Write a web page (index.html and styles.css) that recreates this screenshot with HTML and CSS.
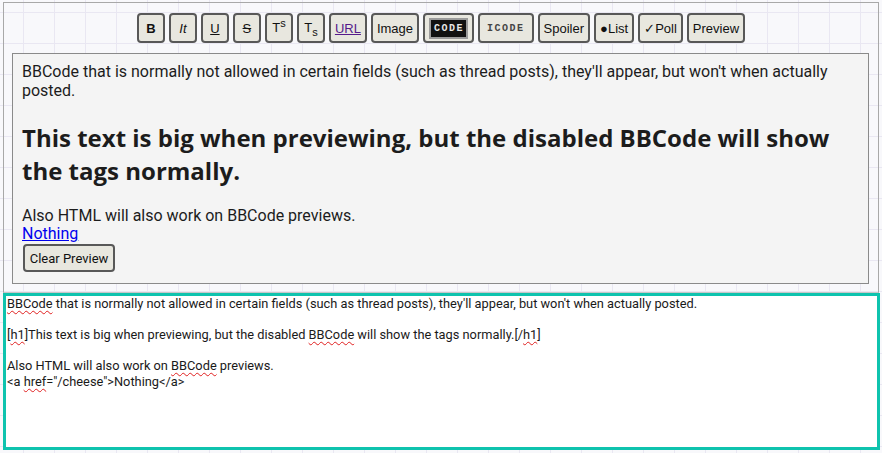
FILE: index.html
```html
<!DOCTYPE html>
<html>
<head>
<meta charset="utf-8">
<link rel="stylesheet" href="styles.css">
</head>
<body>
<div class="editor">
  <div class="frame">
    <div class="toolbar">
      <button class="tb"><b>B</b></button>
      <button class="tb"><i>It</i></button>
      <button class="tb"><u>U</u></button>
      <button class="tb"><s>S</s></button>
      <button class="tb"><span class="tt">T<span class="sup">s</span></span></button>
      <button class="tb"><span class="tt">T<span class="sub">s</span></span></button>
      <button class="tb"><span class="url">URL</span></button>
      <button class="tb">Image</button>
      <button class="tb"><span class="code">CODE</span></button>
      <button class="tb"><span class="icode">ICODE</span></button>
      <button class="tb">Spoiler</button>
      <button class="tb">●List</button>
      <button class="tb">✓Poll</button>
      <button class="tb">Preview</button>
    </div>
    <div class="preview">
      <div class="ptext">BBCode that is normally not allowed in certain fields (such as thread posts), they'll appear, but won't when actually posted.</div>
      <h1 class="big">This text is big when previewing, but the disabled BBCode will show the tags normally.</h1>
      <div class="ptext">Also HTML will also work on BBCode previews.<br><a href="#" class="plink">Nothing</a></div>
      <button class="clear">Clear Preview</button>
    </div>
  </div>
  <div class="input" role="textbox"><span class="sp">BBCode</span> that is normally not allowed in certain fields (such as thread posts), they'll appear, but won't when actually posted.

[<span class="sp">h1</span>]This text is big when previewing, but the disabled <span class="sp">BBCode</span> will show the tags normally.[/<span class="sp">h1</span>]

Also HTML will also work on <span class="sp">BBCode</span> previews.
&lt;a <span class="sp">href</span>="/cheese"&gt;Nothing&lt;/a&gt;</div>
</div>
</body>
</html>
```
FILE: styles.css
```css
html, body {
  margin: 0;
  padding: 0;
}
body {
  width: 882px;
  height: 453px;
  overflow: hidden;
  background-color: #f8f8fb;
  background-image:
    linear-gradient(#e9e7f2 1px, transparent 1px),
    linear-gradient(90deg, #e9e7f2 1px, transparent 1px);
  background-size: 31px 31px;
  background-position: 23px 12px;
  font-family: Roboto, "Liberation Sans", sans-serif;
  color: #1c1c1c;
}
.editor {
  margin: 2px 0 0 3px;
  width: 877px;
}
.frame {
  width: 876px;
  box-sizing: border-box;
  border: 1px solid #a8a8a8;
  border-bottom-color: #c8c8c8;
  padding: 10px 0 8px 0;
}
.toolbar {
  display: flex;
  justify-content: center;
  gap: 4px;
}
.tb {
  box-sizing: border-box;
  height: 30px;
  min-width: 28px;
  padding: 0 4px;
  border: 2px solid #585858;
  border-radius: 4px;
  background: #e8e7df;
  font-family: "Liberation Sans", Arial, sans-serif;
  font-size: 13px;
  color: #111;
  display: flex;
  align-items: center;
  justify-content: center;
}
.tt {
  font-size: 13px;
  line-height: 13px;
}
.sup, .sub {
  font-size: 11px;
  position: relative;
}
.sup { top: -5px; }
.sub { top: 4px; }
.url {
  color: #551a8b;
  text-decoration: underline;
}
.code {
  display: inline-block;
  background: #111;
  border: 2px solid #9b9b9b;
  color: #e8e8e8;
  font-family: "Liberation Mono", monospace;
  font-weight: bold;
  font-size: 10px;
  letter-spacing: 1.5px;
  padding: 3px 2px 3px 3px;
  line-height: 11px;
}
.icode {
  color: #444;
  font-family: "Liberation Mono", monospace;
  font-weight: bold;
  font-size: 10px;
  letter-spacing: 1.5px;
  padding: 0 3px;
}
.preview {
  margin: 10px 9px 0 8px;
  border: 1px solid #8a8a8a;
  background: #f4f4f4;
  padding: 9px 9px 11px 9px;
}
.ptext {
  font-size: 16px;
  line-height: 18.75px;
}
.big {
  font-family: "Open Sans", "Noto Sans", sans-serif;
  font-weight: 700;
  font-size: 24px;
  line-height: 33px;
  margin: 20px 0 20px 0;
}
.plink {
  color: #0000ee;
}
.clear {
  display: block;
  margin: 0 0 0 1px;
  box-sizing: border-box;
  height: 28px;
  width: 92px;
  border: 2px solid #585858;
  border-radius: 4px;
  background: #e8e7df;
  font-family: Roboto, "Liberation Sans", sans-serif;
  font-size: 13px;
  color: #111;
  padding: 0;
}
.input {
  box-sizing: border-box;
  width: 877px;
  height: 157px;
  border: 3px solid #0ec3ae;
  background: #fff;
  padding: 0 1px;
  font-family: Roboto, "Liberation Sans", sans-serif;
  font-size: 12.8px;
  line-height: 15.5px;
  white-space: pre-wrap;
  color: #1a1a1a;
}
.sp {
  text-decoration: underline wavy #e02020;
  text-decoration-thickness: 1px;
  text-underline-offset: 2px;
}
```
